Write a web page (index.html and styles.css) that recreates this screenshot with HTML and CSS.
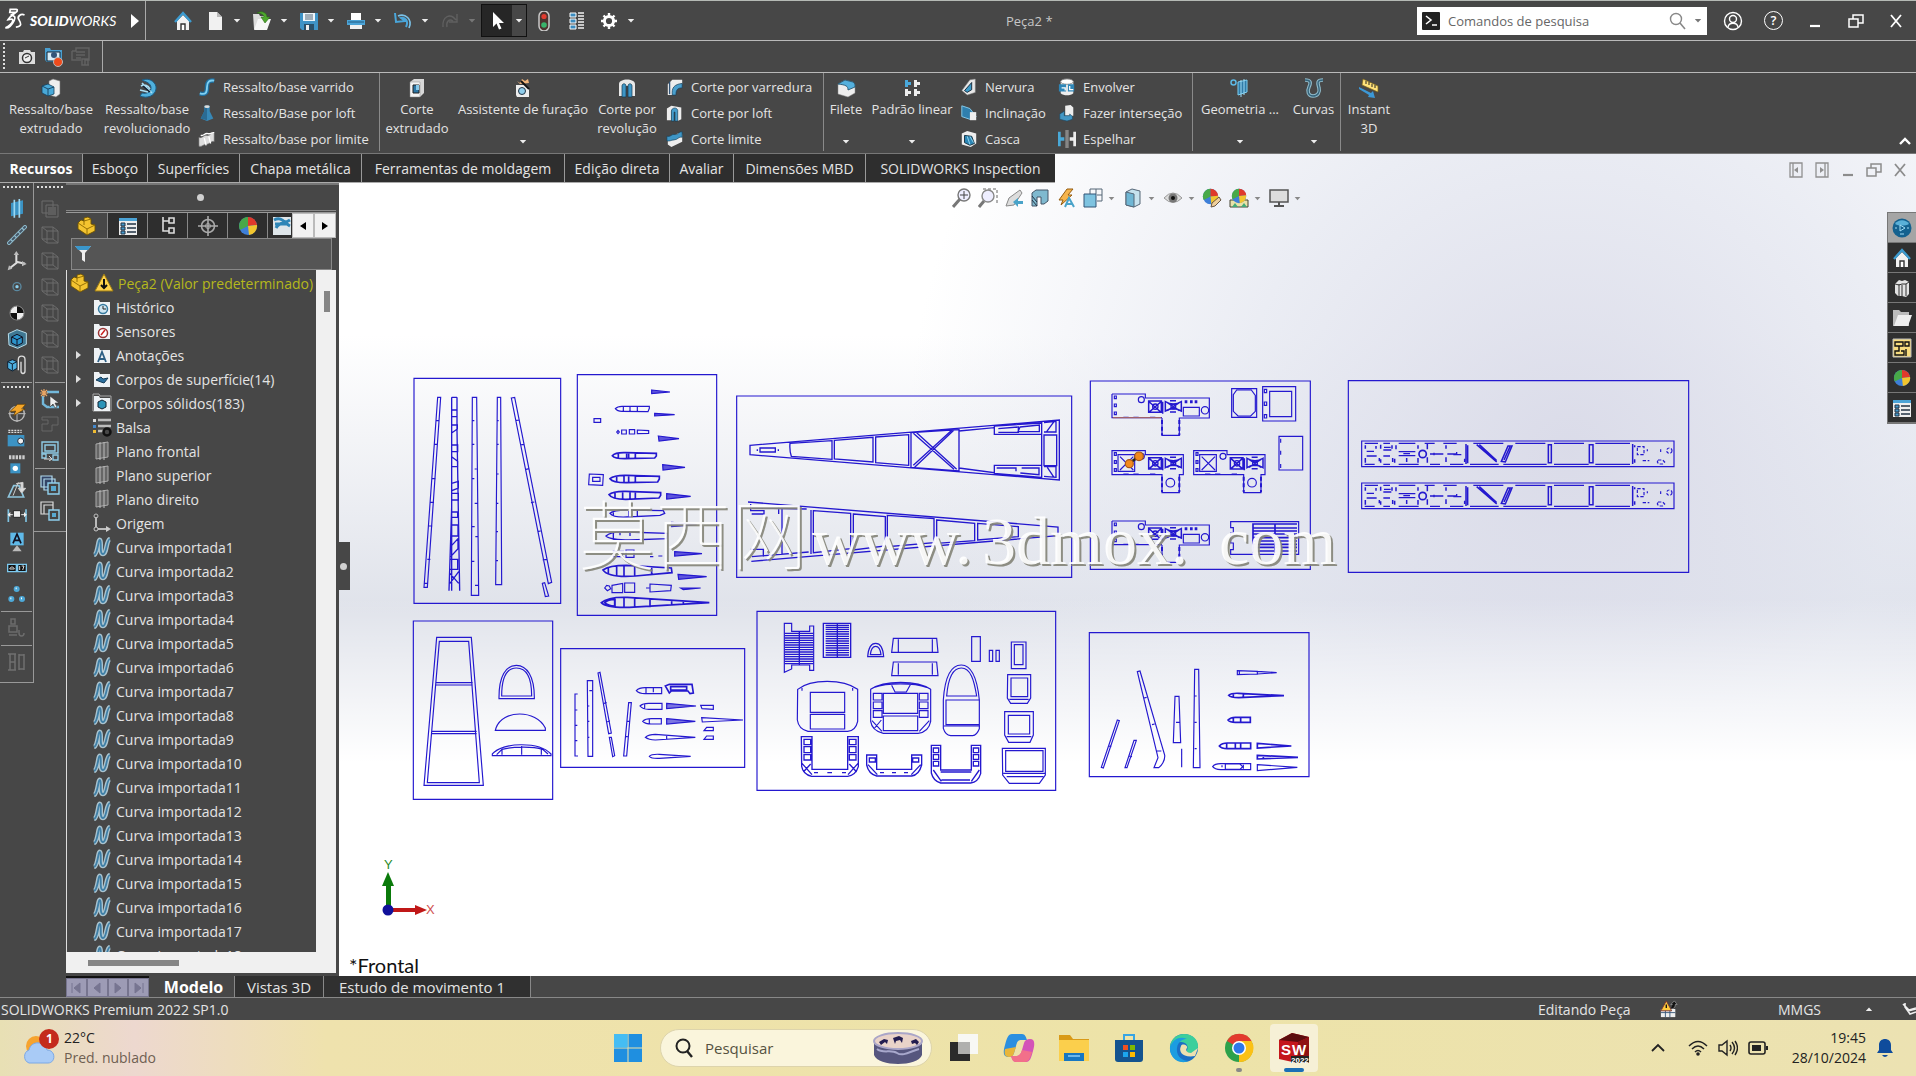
FILE: index.html
```html
<!DOCTYPE html>
<html lang="pt-BR">
<head>
<meta charset="utf-8">
<title>SOLIDWORKS - Peça2</title>
<link rel="stylesheet" href="styles.css">
</head>
<body>
<svg class="defs" aria-hidden="true">
<defs>
<linearGradient id="gb" x1="0" y1="0" x2="1" y2="1"><stop offset="0" stop-color="#9fdcf5"/><stop offset="1" stop-color="#2a7fb0"/></linearGradient>
<symbol id="home" viewBox="0 0 20 20"><path d="M4 10v9h12v-9l-6-6z" fill="#f2f2f2"/><path d="M2 11l8-9 8 9" fill="none" stroke="#3c9bd0" stroke-width="2.4"/><path d="M8 19v-6h4v6" fill="#fff" stroke="#333" stroke-width="1.4"/></symbol>
<symbol id="new" viewBox="0 0 20 20"><path d="M4 1h8l5 5v13H4z" fill="#f1f1f1"/><path d="M12 1v5h5z" fill="#b9b9b9"/></symbol>
<symbol id="open" viewBox="0 0 20 20"><path d="M1 3h6l1 2h6v13H2z" fill="#ddd"/><path d="M6 8h13l-4 11H2z" fill="#f7f7f7"/><path d="M5 2c5-3 10 0 10 4h3l-5 6-4-6h3c0-2-3-4-7-4z" fill="#4ea72e" stroke="#2d6b17" stroke-width=".6"/></symbol>
<symbol id="save" viewBox="0 0 20 20"><path d="M1 2h18v17H3l-2-2z" fill="#3f93c6"/><path d="M4 2h12v8H4z" fill="#eef5fa"/><path d="M6 4h8M6 6h8M6 8h8" stroke="#567"/><path d="M5 13h10v6H5z" fill="#2a4f68"/><path d="M7 14h3v5H7z" fill="#eee"/></symbol>
<symbol id="print" viewBox="0 0 20 20"><path d="M5 2h10v7H5z" fill="#fff"/><path d="M1 9h18v5H1z" fill="#4ba3d6"/><path d="M2 11h16" stroke="#235a80"/><path d="M4 14h12v4H4z" fill="#f0f0f0"/></symbol>
<symbol id="undo" viewBox="0 0 20 20"><path d="M2 2l1 9 9-1-4-3c4-1 8 3 5 9" fill="none" stroke="#4aa6da" stroke-width="2"/><path d="M5 5c7-3 15 3 11 12" fill="none" stroke="#7cc2e8" stroke-width="1.6"/></symbol>
<symbol id="redo" viewBox="0 0 20 20"><path d="M17 3v8H9M16 9C10 1 2 6 3 16M13 10c-4-3-7 1-6 6" fill="none" stroke="#606060" stroke-width="1.4"/></symbol>
<symbol id="arrow" viewBox="0 0 20 20"><path d="M6 1v15l3.500-3.500 2.500 6 2.500-1-2.500-5.500h5z" fill="#fff"/></symbol>
<symbol id="traffic" viewBox="0 0 20 20"><rect x="5" y="0" width="10" height="20" rx="5" fill="#4c3430" stroke="#c9c9c9" stroke-width="1.500"/><circle cx="10" cy="5.500" r="2.600" fill="#e23c30"/><circle cx="10" cy="14" r="2.800" fill="#39b36b"/></symbol>
<symbol id="list" viewBox="0 0 20 20"><path d="M3 2h6v4H3zM3 8h6v4H3zM3 14h6v4H3z" fill="#3c8cbf" stroke="#fff"/><path d="M11 2h6M11 5h6M11 8h6M11 11h6M11 14h6M11 17h6" stroke="#f4f4f4" stroke-width="1.400"/></symbol>
<symbol id="gear" viewBox="0 0 20 20"><circle cx="10" cy="10" r="4.600" fill="none" stroke="#fff" stroke-width="3"/><path d="M10 2v3M10 15v3M2 10h3M15 10h3M4.500 4.500l2 2M13.500 13.500l2 2M4.500 15.500l2-2M13.500 6.500l2-2" stroke="#fff" stroke-width="2.400"/></symbol>
<symbol id="cube" viewBox="0 0 20 20"><path d="M8 3l4-2 7 2v13l-4 3-7-2z" fill="#eee" stroke="#777" stroke-width=".6"/><path d="M1 8l6-2 6 3v7l-6 2-6-3z" fill="#49a9d8" stroke="#17405c" stroke-width=".8"/><path d="M1 8l6 3 6-2M7 11v7" fill="none" stroke="#17405c" stroke-width=".9"/></symbol>
<symbol id="revolve" viewBox="0 0 20 20"><path d="M5 2c8-3 15 3 14 9-1 7-9 10-16 7l2-3c5 1 9-1 9-5 0-5-5-6-9-8z" fill="#4fb0dd" stroke="#1d5c83"/><path d="M4 8c3-2 7-1 9 3M5 5l10 10M3 12l8 2" fill="none" stroke="#a9def4" stroke-width="1.600"/><path d="M6 8l7 6" stroke="#123" stroke-width="1.400"/></symbol>
<symbol id="sweep" viewBox="0 0 20 20"><path d="M2 17c7 2 8-1 8-7s3-8 8-7" fill="none" stroke="#1f6f9f" stroke-width="5"/><path d="M2 17c7 2 8-1 8-7s3-8 8-7" fill="none" stroke="#7fd0f2" stroke-width="2"/></symbol>
<symbol id="loft" viewBox="0 0 20 20"><path d="M7 2h6v6l4 8-7 3-7-3 4-8z" fill="#3788b7"/><path d="M7 3h3v15l-7-2 4-8z" fill="#2b6b93"/><ellipse cx="10" cy="3" rx="3" ry="1.500" fill="#ddd"/></symbol>
<symbol id="bound" viewBox="0 0 20 20"><path d="M1 8c4 2 5-3 9-2s4-4 8-3v10c-4-1-5 3-9 3s-4 3-8 2z" fill="#ddd" stroke="#666" stroke-width=".6"/><path d="M3 6c4 1 4-3 8-2s4-2 7-1M7 9l2 8M12 7l2 8" stroke="#fff" stroke-width="1.500" fill="none"/></symbol>
<symbol id="boundcut" viewBox="0 0 20 20"><path d="M2 9l13-6 3 2v8l-12 6-4-3z" fill="#eee"/><path d="M1 7c5 1 5-3 9-2s4-4 8-3v6c-4-1-5 3-9 3s-4 2-8 1z" fill="#3e96c6" stroke="#143c55" stroke-width=".7"/></symbol>
<symbol id="cut" viewBox="0 0 20 20"><path d="M3 4l4-3h10v14l-4 4H3z" fill="#d8d8d8"/><path d="M3 4h10v15H3z" fill="#f4f4f4" stroke="#888" stroke-width=".5"/><path d="M6 7h6v8H6z" fill="#2b75a4" stroke="#222"/><path d="M9 7h3v5H9z" fill="#88c9ea"/></symbol>
<symbol id="hole" viewBox="0 0 20 20"><path d="M3 7h10l3 3v9H4l-1-2z" fill="#eee"/><circle cx="9" cy="13" r="3.500" fill="#8fcdeb" stroke="#234"/><path d="M4 3l3 2 2-4 3 2 3-2 1 4-9 1z" fill="#f0b37a"/><path d="M8 3l8 8" stroke="#111" stroke-width="2"/></symbol>
<symbol id="revcut" viewBox="0 0 20 20"><path d="M2 6c0-6 16-6 16 0v12h-3V8H5v10H2z" fill="#e8e8e8"/><path d="M5 19V8c0-3 4-3 4 0v11zM11 19V8c0-3 4-3 4 0v11z" fill="#3e96c6" stroke="#14364d" stroke-width=".7"/></symbol>
<symbol id="sweepcut" viewBox="0 0 20 20"><path d="M2 19V7l5-5h11v5l-7 1v11z" fill="#eee"/><path d="M7 19C6 11 9 7 18 6v5c-5 0-7 2-7 8z" fill="#4a9fcd" stroke="#173e58" stroke-width=".8"/><path d="M4 4v14" stroke="#357" stroke-width="1.500"/></symbol>
<symbol id="loftcut" viewBox="0 0 20 20"><path d="M1 5l5-3 11 2v13l-4 2-3-2V8L6 7v11H1z" fill="#ececec"/><path d="M6 19V8c0-4 6-5 7-1v12h-3V9H9v10z" fill="#479dcc" stroke="#143c55" stroke-width=".7"/></symbol>
<symbol id="fillet" viewBox="0 0 20 20"><path d="M2 6l7-4 8 2c2 1 2 3 2 5v6l-7 4-10-3z" fill="#eee" stroke="#888" stroke-width=".5"/><path d="M9 2l8 2c2 1 2 3 2 5l-7 3c0-4-2-5-10-6z" fill="#54b0dd" stroke="#1c4b66" stroke-width=".8"/></symbol>
<symbol id="pattern" viewBox="0 0 20 20"><path d="M3 2h3v2h3v3H6v2H3z" fill="#4aa9dc"/><path d="M12 2h3v2h3v3h-3v2h-3zM3 11h3v2h3v3H6v2H3zM12 11h3v2h3v3h-3v2h-3z" fill="#eee"/></symbol>
<symbol id="rib" viewBox="0 0 20 20"><path d="M2 14l9-12 6-1v15l-9 3z" fill="#e8e8e8" stroke="#777" stroke-width=".6"/><path d="M5 14l8-9v8l-5 3z" fill="#3d9bc8" stroke="#123"/></symbol>
<symbol id="draft" viewBox="0 0 20 20"><path d="M2 2l9 3 7 9-7 3-9-3z" fill="#2f7fae" stroke="#8bd0f0"/><path d="M11 9h7v9h-7z" fill="#eee"/></symbol>
<symbol id="shell" viewBox="0 0 20 20"><path d="M2 4l6-3 10 3v11l-6 4-10-3z" fill="#eee"/><path d="M5 6l8 1 3 8-5 2-6-3z" fill="#2c86b5" stroke="#112b3b"/><path d="M8 7l3 9M11 7l4 7" stroke="#9bdcf4"/></symbol>
<symbol id="wrap" viewBox="0 0 20 20"><path d="M3 4v13c3 3 11 3 14 0V4z" fill="#eee"/><ellipse cx="10" cy="4" rx="7" ry="3" fill="#fff" stroke="#888"/><path d="M1 7h8v8H1zM11 7h7v8h-7z" fill="#2f86b7"/><path d="M4 11h4v3M13 9v4h4" fill="none" stroke="#fff" stroke-width="1.400"/></symbol>
<symbol id="inter" viewBox="0 0 20 20"><path d="M8 2l6-1 3 3v9H8z" fill="#eee"/><path d="M2 11l5-3v5h6v-2l3 3v3l-6 2-8-2z" fill="#4397c4" stroke="#1c4b66" stroke-width=".7"/></symbol>
<symbol id="mirror" viewBox="0 0 20 20"><path d="M0 2h3v6h4v4H3v6H0z" fill="#49a9d8"/><path d="M20 2h-3v6h-4v4h4v6h3z" fill="#eee"/><path d="M9 0v20M11 0v20" stroke="#aaa" stroke-width="1.200"/></symbol>
<symbol id="refgeo" viewBox="0 0 20 20"><circle cx="3.500" cy="4.500" r="2.500" fill="none" stroke="#5cb9e6" stroke-width="1.500"/><path d="M8 4l9-2v12l-9 3z" fill="#2f7ba8" stroke="#7fd0f2"/><path d="M11 2v17M14 1v16" stroke="#9fdcf5"/></symbol>
<symbol id="curves" viewBox="0 0 20 20"><path d="M1 2c6 0 6 3 4 7s-1 9 4 9 7-4 6-8-3-8 4-8" fill="none" stroke="#8fb9c8" stroke-width="3.600"/><path d="M1 2c6 0 6 3 4 7s-1 9 4 9 7-4 6-8-3-8 4-8" fill="none" stroke="#35637a" stroke-width="1.400"/></symbol>
<symbol id="instant" viewBox="0 0 20 20"><path d="M4 1l15 7v6L3 7z" fill="#ffe27a" stroke="#7c6418" stroke-width=".7"/><path d="M7 3v3M10 4v3M13 6v3M16 7v3" stroke="#222"/><path d="M0 9l12 6 2-2 2 7-7-1 1-2-10-6z" fill="#3c98d6"/></symbol>
<symbol id="curve" viewBox="0 0 20 20"><path d="M2 18C6 17 6 2 8 3s-1 14 3 14S14 3 18 2" fill="none" stroke="#a9c3cf" stroke-width="4.600"/><path d="M2 18C6 17 6 2 8 3s-1 14 3 14S14 3 18 2" fill="none" stroke="#3f7fa6" stroke-width="1.800"/></symbol>
<symbol id="folder" viewBox="0 0 20 20"><path d="M2 3h5l1 2h10v13H2z" fill="#eef2f5"/></symbol>
<symbol id="plane" viewBox="0 0 20 20"><path d="M4 3l12-2v15L4 18z" fill="#666" stroke="#aaa"/><path d="M8 1v18M12 1v18" stroke="#bbb"/></symbol>
<symbol id="part" viewBox="0 0 20 20"><path d="M1 7l3-3 3 1 0-3 4-1 3 2v5l4 1v6l-8 4-9-6z" fill="#f4c430" stroke="#6e5200" stroke-width=".9"/><path d="M1 7l9 6 8-4M10 13v6M7 5v4M7 5l7-2" fill="none" stroke="#8a6700" stroke-width=".9"/></symbol>
<symbol id="ball" viewBox="0 0 20 20"><circle cx="10" cy="10" r="9" fill="#3e7fd8"/><path d="M10 10V1A9 9 0 0 0 2 14z" fill="#48a948"/><path d="M10 10V1a9 9 0 0 1 9 8z" fill="#e0392b"/><path d="M10 10l9-1a9 9 0 0 1-8 10z" fill="#f2c52e"/></symbol>
<symbol id="dd" viewBox="0 0 10 6"><path d="M1 1h8L5 5.500z" fill="currentColor"/></symbol>
<symbol id="dim1" viewBox="0 0 20 20"><path d="M2 2h11v12H2zM6 6h12v12H6z" fill="none" stroke="#6c6c6c"/><path d="M8 8h8v8H8z" fill="#5e5e5e"/></symbol>
<symbol id="dim2" viewBox="0 0 20 20"><path d="M2 2h11l5 4v12H7l-5-4zM2 2l5 4h11M7 6v12M13 2v12H2M13 14l5 4" fill="none" stroke="#6c6c6c"/></symbol>
<symbol id="restore" viewBox="0 0 16 16"><path d="M1 6h9v8H1zM5 6V2h10v8h-5" fill="none" stroke="currentColor" stroke-width="1.500"/></symbol>
<symbol id="close" viewBox="0 0 16 16"><path d="M3 2l10 12M13 2L3 14" stroke="currentColor" stroke-width="1.800"/></symbol>
<symbol id="mini" viewBox="0 0 16 16"><path d="M3 13h10" stroke="currentColor" stroke-width="2.200"/></symbol>
</defs>
</svg>

<div class="app">
<header class="titlebar">
  <div class="brand">
    <svg class="ds" viewBox="0 0 48 60"><path d="M13 3h14c4 0 3 6-5 10l-8 4c10 0 12 4 8 12C18 37 10 47 2 46c8-3 16-11 17-17 0-5-7-3-11-2 4-8 12-12 18-17H12zM46 16c-9-4-18 4-13 11 4 7 9 15-7 17" fill="none" stroke="#fff" stroke-width="4"/></svg>
    <span class="word"><b>SOLID</b>WORKS</span>
    <button class="ic play" aria-label="Menu"><svg width="12" height="18" viewBox="0 0 12 18"><path d="M2 2l8 7-8 7z" fill="#fff"/></svg></button>
  </div>
  <nav class="quick" aria-label="Acesso rápido">
    <button class="ic solo" aria-label="Início"><svg class="i20"><use href="#home"/></svg></button>
    <button class="ic pair" aria-label="Novo"><svg class="i20"><use href="#new"/></svg><svg class="dd"><use href="#dd"/></svg></button>
    <button class="ic pair" aria-label="Abrir"><svg class="i20"><use href="#open"/></svg><svg class="dd"><use href="#dd"/></svg></button>
    <button class="ic pair" aria-label="Salvar"><svg class="i20"><use href="#save"/></svg><svg class="dd"><use href="#dd"/></svg></button>
    <button class="ic pair" aria-label="Imprimir"><svg class="i20"><use href="#print"/></svg><svg class="dd"><use href="#dd"/></svg></button>
    <button class="ic pair" aria-label="Desfazer"><svg class="i20"><use href="#undo"/></svg><svg class="dd"><use href="#dd"/></svg></button>
    <button class="ic pair faint" aria-label="Refazer"><svg class="i20"><use href="#redo"/></svg><svg class="dd"><use href="#dd"/></svg></button>
    <button class="ic pick" aria-label="Selecionar"><span><svg class="i20"><use href="#arrow"/></svg></span><svg class="dd"><use href="#dd"/></svg></button>
    <button class="ic solo" aria-label="Reconstruir"><svg class="i20"><use href="#traffic"/></svg></button>
    <button class="ic solo" aria-label="Propriedades"><svg class="i20"><use href="#list"/></svg></button>
    <button class="ic pair" aria-label="Opções"><svg class="i20"><use href="#gear"/></svg><svg class="dd"><use href="#dd"/></svg></button>
  </nav>
  <div class="doc-title">Peça2 *</div>
  <div class="right-tools">
    <div class="cmd">
      <svg width="18" height="18" viewBox="0 0 18 18"><rect width="18" height="18" rx="1" fill="#222"/><path d="M4 4l5 4-5 4M10 13h5" fill="none" stroke="#fff" stroke-width="1.600"/></svg>
      <input type="text" aria-label="Comandos de pesquisa" placeholder="Comandos de pesquisa">
      <svg width="18" height="18" viewBox="0 0 18 18"><circle cx="8" cy="7" r="5.500" fill="none" stroke="#888" stroke-width="1.400"/><path d="M12 11l5 6" stroke="#888" stroke-width="1.600"/></svg>
      <svg class="dd grey"><use href="#dd"/></svg>
    </div>
    <button class="ic win" aria-label="Usuário"><svg width="20" height="20" viewBox="0 0 20 20"><g fill="none" stroke="#fff" stroke-width="1.400"><circle cx="10" cy="10" r="8.500"/><circle cx="10" cy="8" r="3.500"/><path d="M5 16c1-5 9-5 10 0"/></g></svg></button>
    <button class="ic win help" aria-label="Ajuda"><span>?</span></button>
    <button class="ic win" aria-label="Minimizar"><svg class="i16"><use href="#mini"/></svg></button>
    <button class="ic win" aria-label="Restaurar"><svg class="i16"><use href="#restore"/></svg></button>
    <button class="ic win" aria-label="Fechar"><svg class="i16"><use href="#close"/></svg></button>
  </div>
</header>

<div class="capture">
  <div class="capture-in">
    <i class="vgrip"></i>
    <button class="ic" aria-label="Captura"><svg class="i20" viewBox="0 0 20 20"><path d="M2 5h4l1-2h6l1 2h4v12H2z" fill="#ddd"/><circle cx="10" cy="11" r="4.500" fill="#eee" stroke="#333" stroke-width="1.500"/><path d="M8 11l4-2" stroke="#333"/></svg></button>
    <button class="ic" aria-label="Gravar"><svg class="i20" viewBox="0 0 20 20"><path d="M1 1h5l1 2h11v12H3L1 13z" fill="#4a9fd0"/><path d="M3 5h13v9H3z" fill="#d6edf8" stroke="#123"/><circle cx="10" cy="8" r="3" fill="#357"/><circle cx="14" cy="15" r="4.500" fill="#ef4b1c" stroke="#bbb"/></svg></button>
    <button class="ic" aria-label="Parar"><svg class="i20" viewBox="0 0 20 20"><path d="M1 4h4V1h13v12h-4v5h4M1 4v9h9M5 5h9M5 8h9M5 11h5M11 12h6v6h-6z" fill="none" stroke="#626262" stroke-width="1.400"/></svg></button>
  </div>
</div>

<div class="ribbon">
  <section class="grp g1">
    <button class="big"><svg class="i20"><use href="#cube"/></svg><span>Ressalto/base extrudado</span></button>
    <button class="big"><svg class="i20"><use href="#revolve"/></svg><span>Ressalto/base revolucionado</span></button>
    <div class="stack">
      <button class="row"><svg class="i18"><use href="#sweep"/></svg>Ressalto/base varrido</button>
      <button class="row"><svg class="i18"><use href="#loft"/></svg>Ressalto/Base por loft</button>
      <button class="row"><svg class="i18"><use href="#bound"/></svg>Ressalto/base por limite</button>
    </div>
  </section>
  <section class="grp g2">
    <button class="big"><svg class="i20"><use href="#cut"/></svg><span>Corte extrudado</span></button>
    <button class="big"><svg class="i20"><use href="#hole"/></svg><span>Assistente de furação</span><svg class="dd"><use href="#dd"/></svg></button>
    <button class="big"><svg class="i20"><use href="#revcut"/></svg><span>Corte por revolução</span></button>
    <div class="stack">
      <button class="row"><svg class="i18"><use href="#sweepcut"/></svg>Corte por varredura</button>
      <button class="row"><svg class="i18"><use href="#loftcut"/></svg>Corte por loft</button>
      <button class="row"><svg class="i18"><use href="#boundcut"/></svg>Corte limite</button>
    </div>
  </section>
  <section class="grp g3">
    <button class="big"><svg class="i20"><use href="#fillet"/></svg><span>Filete</span><svg class="dd"><use href="#dd"/></svg></button>
    <button class="big"><svg class="i20"><use href="#pattern"/></svg><span>Padrão linear</span><svg class="dd"><use href="#dd"/></svg></button>
    <div class="stack">
      <button class="row"><svg class="i18"><use href="#rib"/></svg>Nervura</button>
      <button class="row"><svg class="i18"><use href="#draft"/></svg>Inclinação</button>
      <button class="row"><svg class="i18"><use href="#shell"/></svg>Casca</button>
    </div>
    <div class="stack">
      <button class="row"><svg class="i18"><use href="#wrap"/></svg>Envolver</button>
      <button class="row"><svg class="i18"><use href="#inter"/></svg>Fazer interseção</button>
      <button class="row"><svg class="i18"><use href="#mirror"/></svg>Espelhar</button>
    </div>
  </section>
  <section class="grp g4">
    <button class="big"><svg class="i20"><use href="#refgeo"/></svg><span>Geometria ...</span><svg class="dd"><use href="#dd"/></svg></button>
    <button class="big"><svg class="i20"><use href="#curves"/></svg><span>Curvas</span><svg class="dd"><use href="#dd"/></svg></button>
  </section>
  <section class="grp g5">
    <button class="big"><svg class="i20"><use href="#instant"/></svg><span>Instant 3D</span></button>
  </section>
  <button class="ic fold" aria-label="Recolher"><svg width="12" height="8" viewBox="0 0 12 8"><path d="M1 7l5-5 5 5" fill="none" stroke="#fff" stroke-width="2.400"/></svg></button>
</div>

<main class="work">
  <nav class="tabs">
    <button class="tab on">Recursos</button><button class="tab">Esboço</button><button class="tab">Superfícies</button><button class="tab">Chapa metálica</button><button class="tab">Ferramentas de moldagem</button><button class="tab">Edição direta</button><button class="tab">Avaliar</button><button class="tab">Dimensões MBD</button><button class="tab">SOLIDWORKS Inspection</button>
  </nav>

  <aside class="side">
    <div class="bar bar1">
      <i class="hgrip"></i>
      <button class="ic"><svg viewBox="18 56 60 60"><path d="M30 68l36-8v40l-36 8z" fill="#3b93c4"/><path d="M40 58v54M55 56v56" stroke="#9bd8f3" stroke-width="5"/></svg></button>
      <button class="ic"><svg viewBox="18 134 60 60"><path d="M20 192l56-56" stroke="#8fbccd" stroke-width="12"/><path d="M22 190l52-52" stroke="#456" stroke-width="6" stroke-dasharray="12 4"/></svg></button>
      <button class="ic"><svg viewBox="18 214 60 60"><path d="M46 222v28l-20 16M46 246l26 6" fill="none" stroke="#ddd" stroke-width="6"/><path d="M46 214l-8 12h16zM20 272l4-15 10 10zM77 253l-14-9v16z" fill="#bbb"/></svg></button>
      <button class="ic"><svg viewBox="18 292 60 60"><circle cx="48" cy="321" r="12" fill="none" stroke="#5b89a0" stroke-width="4"/><circle cx="48" cy="321" r="5" fill="#8cd0ef"/></svg></button>
      <button class="ic"><svg viewBox="18 368 60 60"><circle cx="48" cy="398" r="21" fill="#eee" stroke="#888" stroke-width="3"/><path d="M48 398v-20a20 20 0 0 1 20 20zM48 398v20a20 20 0 0 1-20-20z" fill="#111"/></svg></button>
      <button class="ic"><svg viewBox="18 446 60 60"><path d="M22 460l26-12 28 10v34l-26 12-26-10z" fill="#3f7893" stroke="#b7dcea" stroke-width="3"/><path d="M32 470l16-8 16 8v18l-16 8-16-8z" fill="#2b93cb" stroke="#112" stroke-width="3"/><path d="M32 470l16 8 16-8M48 478v18" stroke="#112" stroke-width="3" fill="none"/></svg></button>
      <button class="ic"><svg viewBox="18 524 60 60"><path d="M20 544l14-6 14 6v20l-14 8-14-8z" fill="#4dafe0" stroke="#123" stroke-width="3"/><path d="M20 544l14 7 14-7M34 551v20" fill="none" stroke="#123" stroke-width="3"/><path d="M52 570v-32c0-14 20-14 20 0v34c0 10-12 10-12 0v-28" fill="none" stroke="#ddd" stroke-width="4"/></svg></button>
      <hr><i class="hgrip"></i>
      <button class="ic"><svg viewBox="18 665 60 60"><circle cx="48" cy="700" r="22" fill="none" stroke="#bbb" stroke-width="4"/><path d="M48 676v50M22 700h52" stroke="#bbb" stroke-width="3"/><path d="M26 694l24-22h24l-12 14h10l-34 20 6-14z" fill="#f4a62a" stroke="#5b3a00" stroke-width="2"/></svg></button>
      <button class="ic"><svg viewBox="18 745 60 60"><path d="M22 752h40M22 758h40" stroke="#ddd" stroke-width="4" stroke-dasharray="6 3"/><path d="M20 766h50v34H20z" fill="#3c93c4"/><circle cx="59" cy="784" r="9" fill="#eee" stroke="#234" stroke-width="3"/></svg></button>
      <button class="ic"><svg viewBox="18 822 60 60"><path d="M24 832h50" stroke="#ccc" stroke-width="12" stroke-dasharray="7 3"/><path d="M28 850h30v30H28z" fill="#3c93c4"/><circle cx="43" cy="865" r="8" fill="#fff"/></svg></button>
      <button class="ic"><svg viewBox="18 903 60 60"><path d="M22 954l16-34h16l14 34z" fill="none" stroke="#8fc6de" stroke-width="5"/><path d="M36 950l16-40M46 914h14v16l-8-2 10 14 12-14h-8v-18z" fill="#ddd" stroke="#ccc" stroke-width="3"/></svg></button>
      <button class="ic"><svg viewBox="18 980 60 60"><path d="M22 990v38M75 990v38" stroke="#7fc3e2" stroke-width="5"/><path d="M22 1006h54" stroke="#eee" stroke-width="3"/><path d="M37 994h22v20H37z" fill="#eee" stroke="#222" stroke-width="3"/><path d="M28 998v16l-8-8zM69 998v16l8-8z" fill="#eee"/></svg></button>
      <button class="ic"><svg viewBox="18 1058 60 60"><path d="M28 1060h40v38H28z" fill="#5fb9e8"/><path d="M36 1092l12-28 12 28M40 1083h16" fill="none" stroke="#112" stroke-width="5"/><path d="M48 1098l-14 18h28z" fill="#bbb"/></svg></button>
      <button class="ic"><svg viewBox="18 1137 60 60"><path d="M20 1156h26v22H20zM50 1156h26v22H50z" fill="#111" stroke="#7cc9ef" stroke-width="4"/><path d="M26 1170c2-8 12-8 14 0zM56 1161v12M62 1161h7l-4 12" fill="none" stroke="#ddd" stroke-width="3"/></svg></button>
      <button class="ic"><svg viewBox="18 1215 60 60"><g fill="#4ea9d8"><circle cx="47" cy="1230" r="9"/><circle cx="31" cy="1260" r="9"/><circle cx="63" cy="1260" r="9"/></g><path d="M44 1228h3M28 1258h3M60 1258h3" stroke="#fff" stroke-width="5"/></svg></button>
      <hr>
      <button class="ic"><svg viewBox="0 0 20 20"><path d="M4 1h4v5H4zM2 8h8v6H2zM2 17h8M12 12v3c0 4 5 4 5 0" fill="none" stroke="#6c6c6c" stroke-width="1.500"/></svg></button>
      <hr>
      <button class="ic"><svg viewBox="0 0 20 20"><path d="M3 2v16M8 2v16M3 10h5M12 2v16M17 2v16M12 3h5M12 17h5M1 2h8M1 18h8" fill="none" stroke="#707070" stroke-width="1.500"/></svg></button>
    </div>
    <div class="bar bar2">
      <i class="hgrip"></i>
      <button class="ic"><svg><use href="#dim1"/></svg></button>
      <button class="ic"><svg><use href="#dim2"/></svg></button>
      <button class="ic"><svg><use href="#dim2"/></svg></button>
      <button class="ic"><svg><use href="#dim2"/></svg></button>
      <button class="ic"><svg><use href="#dim2"/></svg></button>
      <button class="ic"><svg><use href="#dim2"/></svg></button>
      <button class="ic"><svg><use href="#dim2"/></svg></button>
      <hr>
      <button class="ic"><svg viewBox="0 0 20 20"><path d="M7 3h12M3 7v8l4 3h12" fill="none" stroke="#73b8da" stroke-width="2.400"/><path d="M4 0v8M0 4h8M1 1l6 6M7 1L1 7" stroke="#e9a665" stroke-width="1.200"/><path d="M10 7v11l3-3 2 4 2-1-2-4h4z" fill="#eee" stroke="#333" stroke-width=".6"/></svg></button>
      <button class="ic"><svg viewBox="0 0 20 20"><path d="M2 2h16v8h-6v6H2v-7h6V5H2z" fill="none" stroke="#666"/></svg></button>
      <button class="ic"><svg viewBox="0 0 20 20"><path d="M2 1h16v11H2zM5 4h10v6H5z" fill="none" stroke="#8fcbe6" stroke-width="1.400"/><path d="M2 13h4v4H2zM13 14h5v5h-5z" fill="none" stroke="#8fcbe6" stroke-width="1.400"/><path d="M4 18h7M9 15l3 3-3 2" stroke="#ddd" fill="none"/></svg></button>
      <hr>
      <button class="ic"><svg viewBox="0 0 20 20"><path d="M1 1h11v11H1zM4 4h11v11H4z" fill="#346" stroke="#b3dbed" stroke-width="1.200"/><path d="M8 8h11v11H8z" fill="#444" stroke="#8fd0ee" stroke-width="1.400"/><path d="M11 11h5v5h-5z" fill="#58a9d0"/></svg></button>
      <button class="ic"><svg viewBox="0 0 20 20"><path d="M1 1h12v12H1zM4 4h9v9H4z" fill="#444" stroke="#ddd" stroke-width="1.200"/><path d="M9 9h10v10H9z" fill="#444" stroke="#8fd0ee" stroke-width="1.400"/><path d="M12 12h4v4h-4z" fill="#58a9d0"/></svg></button>
    </div>
    <div class="tree-panel">
      <div class="pin"><i class="dot"></i></div>
      <div class="ptabs">
        <button class="ptab on" aria-label="Árvore"><svg class="i20"><use href="#part"/></svg></button>
        <button class="ptab" aria-label="Propriedades"><svg class="i20" viewBox="0 0 20 20"><path d="M1 2h18v17H1z" fill="#eee"/><path d="M1 2h18v3H1z" fill="#4ba3d6"/><path d="M3 7h4v3H3zM3 11h4v3H3zM3 15h4v3H3z" fill="#49c" stroke="#234"/><path d="M9 8h9M9 12h9M9 16h9" stroke="#234" stroke-width="1.400"/></svg></button>
        <button class="ptab" aria-label="Configurações"><svg class="i20" viewBox="0 0 20 20"><path d="M5 1v14h6M5 5h6M11 2h5v5h-5zM11 12h5v5h-5z" fill="none" stroke="#ddd" stroke-width="1.600"/></svg></button>
        <button class="ptab" aria-label="Dimensões"><svg class="i20" viewBox="0 0 20 20"><circle cx="10" cy="10" r="6.500" fill="none" stroke="#aaa" stroke-width="1.600"/><path d="M10 0v20M0 10h20" stroke="#aaa" stroke-width="1.600"/><circle cx="10" cy="10" r="2.500" fill="none" stroke="#aaa"/></svg></button>
        <button class="ptab" aria-label="Aparência"><svg class="i20"><use href="#ball"/></svg></button>
        <button class="ptab cutoff" aria-label="CAM"><svg class="i20" viewBox="0 0 20 20"><path d="M1 1h18v18H1z" fill="#dfe6ea"/><path d="M2 4c8-4 10 3 16 6M4 12c3-6 8-4 14-8M3 8h12" fill="none" stroke="#2f86b7" stroke-width="3"/></svg></button>
        <button class="scr" aria-label="Anterior"><svg width="8" height="10" viewBox="0 0 8 10"><path d="M7 1v8L1 5z"/></svg></button>
        <button class="scr" aria-label="Próximo"><svg width="8" height="10" viewBox="0 0 8 10"><path d="M1 1v8l6-4z"/></svg></button>
      </div>
      <label class="filter"><svg class="i20" viewBox="0 0 20 20"><path d="M2 2h16l-6 7v9l-3-2V9z" fill="#eee"/><path d="M2 2h16l-3 4H5z" fill="#3a96cb"/></svg><input type="text" aria-label="Filtro"></label>
      <div class="tree-wrap">
        <ul class="tree">
          <li class="root"><svg class="i20"><use href="#part"/></svg><svg class="i18" viewBox="0 0 20 20"><path d="M10 1l9 17H1z" fill="#ffd24a" stroke="#9b7b12"/><path d="M10 6v9M7 12l3 3 3-3" fill="none" stroke="#111" stroke-width="2"/></svg>Peça2 (Valor predeterminado)</li>
          <li><i></i><svg viewBox="0 0 20 20"><use href="#folder"/><circle cx="11" cy="12" r="4.500" fill="#cfe6f2" stroke="#367a9f" stroke-width="1.500"/><path d="M11 9v3h3" stroke="#222" fill="none"/></svg>Histórico</li>
          <li><i></i><svg viewBox="0 0 20 20"><use href="#folder"/><circle cx="11" cy="12" r="4.500" fill="#fff" stroke="#933" stroke-width="1.500"/><path d="M9 14l4-5" stroke="#c22" stroke-width="1.500"/></svg>Sensores</li>
          <li><i class="exp"></i><svg viewBox="0 0 20 20"><use href="#folder"/><path d="M6 17l4-10 4 10M7.500 14h5" fill="none" stroke="#2d5f85" stroke-width="1.800"/></svg>Anotações</li>
          <li><i class="exp"></i><svg viewBox="0 0 20 20"><use href="#folder"/><path d="M4 11l5-3 2 2 5-1-4 5-3-1z" fill="#2b6f9e" stroke="#153c58"/></svg>Corpos de superfície(14)</li>
          <li><i class="exp"></i><svg viewBox="0 0 20 20"><path d="M1 1h6l1 2h11v15H1z" fill="none" stroke="#aaa"/><use href="#folder"/><path d="M6 9l4-2 4 2v5l-4 2-4-2z" fill="#2b93b8" stroke="#123"/></svg>Corpos sólidos(183)</li>
          <li><i></i><svg viewBox="0 0 20 20"><path d="M6 3h13M6 9h13M6 14h6" stroke="#bbb" stroke-width="2.400"/><path d="M1 2h3v3H1z" fill="#ddd"/><path d="M1 8h3v3H1z" fill="#48c"/><path d="M1 13h3v3H1z" fill="#eb3"/><circle cx="15" cy="15" r="3.500" fill="none" stroke="#111" stroke-width="2.500"/></svg>Balsa</li>
          <li><i></i><svg><use href="#plane"/></svg>Plano frontal</li>
          <li><i></i><svg><use href="#plane"/></svg>Plano superior</li>
          <li><i></i><svg><use href="#plane"/></svg>Plano direito</li>
          <li><i></i><svg viewBox="0 0 20 20"><path d="M4 4v12h13" fill="none" stroke="#bbb" stroke-width="2"/><circle cx="4" cy="3" r="2" fill="none" stroke="#bbb"/><path d="M14 13l5 3-5 3z" fill="#ccc"/><circle cx="4" cy="16" r="2" fill="#444" stroke="#ccc"/></svg>Origem</li>
          <li><i></i><svg><use href="#curve"/></svg>Curva importada1</li>
          <li><i></i><svg><use href="#curve"/></svg>Curva importada2</li>
          <li><i></i><svg><use href="#curve"/></svg>Curva importada3</li>
          <li><i></i><svg><use href="#curve"/></svg>Curva importada4</li>
          <li><i></i><svg><use href="#curve"/></svg>Curva importada5</li>
          <li><i></i><svg><use href="#curve"/></svg>Curva importada6</li>
          <li><i></i><svg><use href="#curve"/></svg>Curva importada7</li>
          <li><i></i><svg><use href="#curve"/></svg>Curva importada8</li>
          <li><i></i><svg><use href="#curve"/></svg>Curva importada9</li>
          <li><i></i><svg><use href="#curve"/></svg>Curva importada10</li>
          <li><i></i><svg><use href="#curve"/></svg>Curva importada11</li>
          <li><i></i><svg><use href="#curve"/></svg>Curva importada12</li>
          <li><i></i><svg><use href="#curve"/></svg>Curva importada13</li>
          <li><i></i><svg><use href="#curve"/></svg>Curva importada14</li>
          <li><i></i><svg><use href="#curve"/></svg>Curva importada15</li>
          <li><i></i><svg><use href="#curve"/></svg>Curva importada16</li>
          <li><i></i><svg><use href="#curve"/></svg>Curva importada17</li>
          <li><i></i><svg><use href="#curve"/></svg>Curva importada18</li>
        </ul>
        <div class="vscroll"><i></i></div>
      </div>
      <div class="hscroll"><i></i></div>
    </div>
  </aside>

  <section class="view">
    <svg class="canvas" viewBox="339 154 1577 822" preserveAspectRatio="xMinYMin slice" fill="none" stroke="#2418cf">
      <g transform="translate(400 360) scale(.33333)" stroke-width="3.500">
        <path d="M42 55h440v675H42zM532 44h418v722H532zM40 783h418v535H40zM482 866h552v356H482z"/>
        <path d="M113 112h9L82 682H72zM108 182h10M103 253h10M97 356h10M92 427h10M87 498h10M82 598h9M74 670h9"/>
        <path d="M155 112v580M171 112v100l8 480M147 692l8-250M155 112h16M155 150h16v20h-16zM155 195h17v12l-17 12M155 255h18v20h-18zM155 290l18 14v16h-18M155 370l20-6v20l-20 8zM155 400h20v20h-20M153 456h20v16h-20M152 495h22v33h-22M152 560l22-24v30l-22 24M151 598h22v30h-22M150 640l26 30M176 635l-26 35" stroke-width="4"/>
        <path d="M217 112h13l6 594h-22zM217 182h6M217 253h6M217 356h6M224 327h6M224 430h8M216 500h8M226 530h8M215 604h8M225 676h9"/>
        <path d="M292 112h10l3 562h-18zM291 182h5M291 253h5M291 342h5M290 430h5M289 515h5M289 602h5"/>
        <path d="M334 114l10-2 111 555-10 4zM347 182l10-2M361 255l10-2M378 328l10-2M393 428l10-2M412 515l10-2M428 600l12-2M427 670l7-2 12 40-10 2z"/>
        <path d="M582 176h20v11h-20zM568 342l42 2-2 32-42-2zM578 352h22v12h-22z"/>
        <path d="M755 90l55 6-55 5zM764 160l60 4-60 4zM775 228l62 8-60 7zM788 314l67 8-66 8zM800 401l72 8-72 8zM815 487l75 7-75 6zM824 575l82 6-82 7zM834 643l86 7-84 8zM842 684l60 0-52 5z" fill="#5d55dc"/>
        <path d="M646 146q6-7 20-7h82v6l-4 10-78-1q-14 0-20-8zM670 140v14M690 140v14M712 140v14"/>
        <path d="M650 216l4-5 4 5-4 5zM665 210h14v12h-14zM688 209h16v13h-16zM712 210l34 2v8l-34 1z"/>
        <path d="M637 287q8-10 40-9l92 2v8l-5 6-90 2q-30 0-37-9zM655 280v16M680 279v18M706 279v18M686 279v18" stroke-width="5"/>
        <path d="M630 356q12-11 50-10l98 3v8l-5 9-95 2q-40 0-48-12zM650 348v16M672 346v22M686 346v22M706 347v20" stroke-width="5"/>
        <path d="M627 404q12-11 50-10l105 4v8l-5 8-100 4q-42 0-50-14zM645 396v18M668 394v22M690 394v22M706 394v22" stroke-width="5"/>
        <path d="M630 460q10-10 50-10l110 2 4 8-14 6-100 5q-40 2-50-11zM640 452v16M686 450v20M712 450v20" stroke-width="4"/>
        <path d="M618 528q14-14 60-12l124 4-2 16-110 4q-60 0-72-12zM640 518v22M660 516v10M690 516v12" stroke-width="4"/>
        <path d="M640 574h30l-4 16h-26zM678 570h24v22h-24zM750 590h10M775 588h12"/>
        <path d="M609 630q18-14 70-14l135 8 2 14-110 10q-80 6-97-18zM625 620v22M650 616v30M672 615v32M704 616v32M755 620v24" stroke-width="5"/>
        <path d="M614 684l6-8 8 2 4 8-10 6zM636 676l32-6v28h-32zM674 669h30v28h-30zM738 684h10M750 672l64 4-2 16-62 4z"/>
        <path d="M604 728q20-18 78-16l246 16-240 14q-70 2-84-14zM614 728q10-10 30-10v20q-20 0-30-10zM645 716v26M672 713v30M704 713v30M750 716v26M815 719v18M850 722v12" stroke-width="5"/>
        <path d="M110 832h104l36 444H72zM118 844h88l32 424H82zM106 968h112M106 975h112M94 1114h136M94 1121h136" />
        <path d="M297 1012c0-62 20-96 52-96s54 34 54 96v4H297zM305 1008c0-58 16-84 44-84s46 26 46 84zM288 1104c20-56 120-56 148 0l0 7H286zM277 1182c30-36 140-38 176 0v5H277zM290 1184l16-16c30-8 90-10 122 0l16 14M365 1158v26M306 1168v16M424 1168v16"/>
        <path d="M533 1002h-8v186h9M524 1050h8M524 1096h8M524 1142h8M562 962h16v227h-14zM562 1038h6M562 1084h6M562 1132h6M568 992h8M594 939l6-2 34 182-8 2zM612 1030l8-2M622 1085l8-2M628 1132h6l10 55-6 3zM686 1028h8l-14 160h-9zM680 1084h8M675 1130h8"/>
        <path d="M709 992q8-9 26-9h50v18h-50q-18 0-26-9zM738 983v18M760 985v12M720 1038q8-8 26-8h40v18h-40q-18 0-26-10zM734 1030v18M728 1084q8-8 26-8h30v16h-30q-18 0-26-8zM748 1077v14M736 1132q10-9 30-9l120 9-120 8q-20 0-30-8zM800 1125v14M748 1189q6-7 30-6l94 6-94 6q-24 1-30-6z"/>
        <path d="M796 978l12-5h68l4 26-10 2-6-8h-50l-6 6zM812 980h48v10h-48z" stroke-width="5"/>
        <path d="M800 1030l88 8-88 8zM800 1076l86 8-86 8z" fill="#7b75e2"/>
        <path d="M902 1036h38v12l-34-2zM905 1073l124 7-122 6zM912 1112l8-10h20v10zM912 1138l8-10h20v10z"/>
      </g>
      <g transform="translate(720 380) scale(.33333)" stroke-width="4">
        <path d="M50 48h1005v544H50z" stroke-width="3.500"/>
        <path d="M90 196L1018 120v180L90 224zM120 204h46v12h-46zM112 208v5M175 208v5M210 190l126-8v56l-122-9q-6-18-4-39zM343 181l116-9v74l-116-9zM467 171l99-7v92l-99-8zM573 158l144-9v124l-144-11zM580 160l122 108M590 158l120 110M584 262l118-112M580 256l116-106M717 153l106-10v12M717 264l106 14v-22M823 138l142-9v34H823zM835 146l60-5v16h-60M900 141l58-6v20h-64zM823 256h142v36l-142-12zM830 264h58v10M905 264h52v20l-56-5M972 165h38v92h-38zM965 125v170M972 128l36-4v32h-36M972 260h36v32l-36-3M980 155l22-30M982 262l20 30"/>
        <path d="M84 366l930 75v26L94 544M92 372v20h40v10H95M92 508h38v22M176 382v20M186 384v140M273 390v132M280 392l112 8v106l-112 12zM400 402l96 8v88l-96 12zM502 406l140 10v72l-140 12zM650 420l114 10v52l-114 8zM773 430l122 10v30l-122 10zM96 384l164 3M96 530l170-14" />
      </g>
      <g transform="translate(740 600) scale(.33333)" stroke-width="3.500">
        <path d="M51 34h896v537H51z"/>
        <path d="M133 70h22v24h54V78h12v133h-12v-16h-54v12l-22 10z"/><path d="M134 100h86M134 107h86M134 114h86M134 121h86M134 128h86M134 135h86M134 142h86M134 149h86M134 156h86M134 163h86M134 170h86M134 177h86M134 184h86M134 191h86M178 95v100M250 70h82v102h-82zM257 76h70M257 82h70M257 88h70M257 95h70M257 102h70M257 109h70M257 116h70M257 123h70M257 130h70M257 137h70M257 144h70M257 151h70M257 158h70M257 165h70M292 72v98" stroke-width="4"/>
        <path d="M383 170c2-28 10-40 24-40s22 12 24 40zM391 164c2-18 6-25 16-25s14 7 16 25zM460 115h130l4 42H455zM475 118v38M577 118v38M460 186h130l4 41H455zM475 190v34M577 190v34M695 110h26v74h-26zM748 151h10v33h-10zM768 151h10v33h-10zM814 126h44v80h-44zM823 134h26v60h-26zM803 224h69v70l-10 16h-50l-10-16zM813 234h50v56h-50zM808 298h58M794 335h86v70l-10 22h-64l-12-22zM805 346h64v56h-64zM800 410h74M787 445h129v80l-18 25h-90l-20-25zM797 452h112v62H797zM790 520h126M800 530h110"/>
        <path d="M173 268c40-32 136-32 180 0v96q-6 28-30 30H204q-28-6-32-34zM211 277h103v60H211zM211 343h103v44H211zM186 264v8M338 264v8"/>
        <path d="M392 268c40-28 140-28 180 0v96q-6 32-38 36H430q-34-8-38-36zM402 262c40-14 120-14 158 0M430 280h103v60H430zM430 348h103v44H430zM400 280h26v20h-26zM400 306h26v20h-26zM400 332h26v20h-26zM538 280h26v20h-26zM538 306h26v20h-26zM538 332h26v20h-26zM455 256l10 20h34l12-22M396 362l30 32M568 362l-30 32M404 384l20-24"/>
        <path d="M610 300c4-60 20-105 54-105s48 45 54 105v86q-8 20-20 21h-66q-16-2-22-22zM620 288c4-48 16-84 44-84s38 36 46 84zM618 300h100v74H618zM612 378h108"/>
        <path d="M184 410h32v98h107v-98h32v90q-8 26-32 29H215q-26-6-30-30zM192 418h20v16h-20zM192 440h20v18h-20zM192 464h20v16h-20zM328 418h20v16h-20zM328 440h20v18h-20zM328 464h20v16h-20zM186 490l30 34M354 490l-30 34M190 516l22-24M350 516l-22-24M222 518h12M262 518h14M306 518h12" stroke-width="4"/>
        <path d="M380 465h30v43h105v-43h30v30q-8 30-30 33H410q-24-6-30-33zM388 474h18v12h-18zM518 474h18v12h-18zM384 494l28 30M542 494l-28 30M420 518h12M456 518h12M492 518h12M574 436h28v74h92v-74h28v85q-8 26-30 28h-90q-22-6-28-30zM580 444h16v14h-16zM580 464h16v14h-16zM580 484h16v14h-16zM700 444h16v14h-16zM700 464h16v14h-16zM700 484h16v14h-16zM602 516h92M604 540h86M580 510l24 34M718 510l-24 34" stroke-width="4"/>
      </g>
      <g transform="translate(1070 370) scale(.33333)" stroke-width="3.500">
        <path d="M61 33h660v565H61zM58 788h659v432H58z"/>
        <defs>
          <g id="ctr"><path d="M236 93h38v34h-38zM238 96l34 30M272 96l-34 30M286 95q24 14 48 0v28q-24-14-48 0zM292 98l36 24M328 98l-36 24M300 92h18M300 126h18M278 95v36" stroke-width="4.500"/><circle cx="256" cy="110" r="8" stroke-width="4"/><circle cx="310" cy="110" r="7" stroke-width="4"/><circle cx="214" cy="89" r="9"/><path d="M133 78h6v8h-6zM133 102h6v8h-6zM133 126h6v8h-6zM160 142h16M190 142h16M240 142h16"/></g>
          <g id="longp"><use href="#ctr"/><path d="M126 72h100v12h192v60h-90v52h-52v-52M126 72v71h150M340 112h48v26h-48z"/><circle cx="405" cy="121" r="11"/><path d="M344 95h8M360 95h8M374 95h8" stroke-width="9"/><path d="M276 150v46M328 150v46" stroke-width="6" stroke-dasharray="12 8"/></g>
          <g id="shortp"><use href="#ctr"/><path d="M126 72h100v12h114v60h-12v54h-52v-54H126zM144 84h50v50h-50zM150 90l40 40M190 90l-40 40"/><circle cx="301" cy="168" r="13"/><path d="M276 150v46M328 150v46" stroke-width="6" stroke-dasharray="12 8"/></g>
        </defs>
        <use href="#longp"/><path d="M128 143h146" stroke="#a0606a"/>
        <use href="#shortp" y="170"/><use href="#shortp" x="245" y="170"/><use href="#longp" y="381"/>
        <path d="M178 280l30-22" stroke-width="8" stroke="#222"/><circle cx="178" cy="281" r="12" fill="#f28a1d" stroke="#a6551a"/><circle cx="207" cy="259" r="13" fill="#f28a1d" stroke="#a6551a"/>
        <path d="M485 56h75v86h-75zM500 60h44l12 16v48l-14 14h-38l-14-14V74zM578 50h99v103H578zM599 64h66v76h-66zM583 58h7v10h-7zM583 96h7v10h-7zM583 134h7v10h-7zM627 199h71v101h-71zM632 206v12M632 242v12M632 282v12M482 455h204v98H482v-14h8v-20h-8v-30h8v-16h-8z"/>
        <path d="M549 462h132M549 474h132M549 483h132M549 492h132M549 503h132M549 513h132M549 523h132M549 532h132M549 543h132M615 462v86M549 460v90" stroke-width="5"/>
        <path d="M142 1050l6 2-48 142-6-2zM116 1128l8 2M192 1111h7l-28 82h-6zM178 1158l8 2M202 905l8-2 74 252c2 16-10 34-18 38h-14l12-30zM222 984l8-2M246 1064l8-2M258 1143h16M315 979h12l5 139h-22zM318 1057h10M335 1136v56M374 898h12l4 295h-20zM374 978h6M374 1057h6M374 1136h6"/>
        <path d="M502 902l60 2 58 4-58 4-60 2zM562 902v12M508 902v10M562 1184l120 8-120 10zM428 1190q6-9 24-9h90v18h-90q-18-1-24-9zM466 1182h44l8 8-8 8h-44zM456 1186v6M520 1184v12"/>
        <path d="M476 976q8-7 30-6l136 7-136 6q-24 0-30-7zM490 971v12M520 970v12M474 1050q8-8 22-8h45v15h-45q-16 0-22-7zM490 1044v12M512 1044v12M448 1128q8-9 24-9h70v17h-70q-18 0-24-8zM470 1120v15M496 1120v15M512 1120v15M562 1120l102 8-102 6zM562 1156l122 6-122 5zM580 1158v8" stroke-width="5"/>
      </g>
      <g transform="translate(1330 370) scale(.33333)" stroke-width="3.500">
        <path d="M55 32h1021v575H55z"/>
        <defs><g id="sidep"><path d="M95 213h937v77H95z"/><path d="M104 220h40M160 220h20M206 220h50M284 220h30M340 220h40M430 220h90M556 220h90M672 220h90M796 220h104M420 283h86M520 283h130M672 283h104M796 283h104M104 283h30M160 283h20M206 283h60M300 283h30M360 283h40"/><path d="M110 244h22M110 258h30M160 240h24M162 232h20M160 258h20M206 245h50M206 257h50M220 251h20M300 252h40M352 252h30M370 254h24M312 248v8M380 246v6" stroke-width="4"/><path d="M106 226v10M138 228v8M152 224v12M186 226v10M198 226v12M264 226v10M292 222v16M348 226v10M106 264v14M148 264v10M152 268v10M188 264v12M194 266v12M230 264v12M264 264v14M292 262v16M348 262v14M404 266v10" stroke-width="4.500"/><circle cx="278" cy="252" r="11" stroke-width="5"/><path d="M408 222v60M413 226v54M440 224l60 52M448 224l52 48M500 276l-6-6M514 274l20-46h12l-20 48zM522 270l18-40M655 224h9v54h-9zM778 224h11v54h-11zM908 222v60M914 226v6M914 268v10" stroke-width="4.500"/><path d="M922 230h20v24h-20zM938 272h20M984 270h14l6 6-6 6h-12l-4-6zM952 238v6M992 238v8" stroke-dasharray="10 5"/><circle cx="1018" cy="242" r="8" stroke-dasharray="9 5"/></g></defs>
        <use href="#sidep"/><use href="#sidep" y="126"/>
      </g>
      <g stroke="none">
        <path d="M386 884h5v26h-5z" fill="#0a7a0a"/><path d="M388 872l6 14h-12z" fill="#0a7a0a"/>
        <path d="M391 908h24v4h-24z" fill="#c01818"/><path d="M427 910l-12-5v10z" fill="#c01818"/>
        <circle cx="388" cy="910" r="5.500" fill="#10109a"/>
        <text x="384" y="869" class="axis" fill="#2c8a2c">Y</text><text x="426" y="914" class="axis" fill="#d05050">X</text>
        <text x="349" y="973" class="front" fill="#111">*Frontal</text>
        <g class="mark"><text x="579" y="564" class="han">莫西网</text><text x="812" y="564">www.</text><text x="982" y="564">3dmox.</text><text x="1219" y="564">com</text></g>
      </g>
    </svg>
    <div class="hud">
      <button class="ic"><svg class="i20" viewBox="0 0 20 20"><path d="M1 19l7-8" stroke="#777" stroke-width="3"/><circle cx="12" cy="7" r="6" fill="#eef" stroke="#777" stroke-width="1.400"/><path d="M12 3v8M8 7h8" stroke="#444"/></svg></button>
      <button class="ic"><svg class="i20" viewBox="0 0 20 20"><path d="M1 19l5-6" stroke="#777" stroke-width="3"/><path d="M5 1h14v14" fill="none" stroke="#666" stroke-dasharray="3 2"/><circle cx="10" cy="8" r="6" fill="#eef" stroke="#888" stroke-width="1.400"/></svg></button>
      <button class="ic"><svg class="i20" viewBox="0 0 20 20"><path d="M2 18l3-8L16 2l2 3-8 12z" fill="#ddd" stroke="#888"/><path d="M9 14l5-4v3h5v3h-5v3z" fill="#4aa3c9"/></svg></button>
      <button class="ic"><svg class="i20" viewBox="0 0 20 20"><path d="M2 5l4-3h12v11l-4 3h-3V9H7v9H2z" fill="#7fb9cf" stroke="#456"/><path d="M2 8l5 6M2 12l5 6" stroke="#234"/></svg></button>
      <button class="ic"><svg class="i20" viewBox="0 0 20 20"><path d="M3 12L11 1h6l-5 6h4L5 17l2-5z" fill="#f5b44c" stroke="#955c10"/><path d="M9 19l4-9 5 9M11 16h5" fill="none" stroke="#4aa3c9" stroke-width="2"/></svg></button>
      <button class="ic wide"><svg class="i20" viewBox="0 0 20 20"><path d="M7 1h12v12h-5M7 1v5M13 1v5M14 7h5" fill="none" stroke="#567"/><path d="M1 6h12v13H1z" fill="#7ec3e0" stroke="#357"/></svg><svg class="dd"><use href="#dd"/></svg></button>
      <button class="ic wide"><svg class="i20" viewBox="0 0 20 20"><path d="M3 4l6-3 8 2v13l-6 3-8-2z" fill="#c6e2ee" stroke="#567"/><path d="M3 4l8 2v13l-8-2z" fill="#6fb6d4" stroke="#567"/></svg><svg class="dd"><use href="#dd"/></svg></button>
      <button class="ic wide"><svg class="i20" viewBox="0 0 20 20"><path d="M1 10q9-10 18 0-9 9-18 0z" fill="#ddd" stroke="#999"/><circle cx="10" cy="10" r="4.500" fill="#777"/><circle cx="10" cy="10" r="2" fill="#111"/></svg><svg class="dd"><use href="#dd"/></svg></button>
      <button class="ic"><svg class="i20" viewBox="0 0 20 20"><use href="#ball" width="17" height="17"/><path d="M9 19l1-4 7-6 2 3-6 6z" fill="#f0cf9a" stroke="#654"/></svg></button>
      <button class="ic wide"><svg class="i20" viewBox="0 0 20 20"><path d="M1 12h18v7H1z" fill="#e9e2a8" stroke="#443"/><use href="#ball" x="2" width="16" height="16"/><path d="M3 19l3-4 3 4M12 19l3-4 3 4" fill="#4a7"/></svg><svg class="dd"><use href="#dd"/></svg></button>
      <button class="ic wide"><svg class="i20" viewBox="0 0 20 20"><path d="M1 2h18v12H1z" fill="#ddd" stroke="#555" stroke-width="1.500"/><path d="M10 14v4M5 18h10" stroke="#555" stroke-width="2"/></svg><svg class="dd"><use href="#dd"/></svg></button>
    </div>
    <div class="docwin">
      <button class="ic"><svg class="i16" viewBox="0 0 16 16"><path d="M2 1h12v14H2zM5 1v14" fill="none" stroke="#909090" stroke-width="1.300"/><path d="M10 5v6L6 8z" fill="#909090"/></svg></button>
      <button class="ic"><svg class="i16" viewBox="0 0 16 16"><path d="M2 1h12v14H2zM11 1v14" fill="none" stroke="#909090" stroke-width="1.300"/><path d="M6 5v6l4-3z" fill="#909090"/></svg></button>
      <button class="ic"><svg class="i16"><use href="#mini"/></svg></button>
      <button class="ic"><svg class="i16"><use href="#restore"/></svg></button>
      <button class="ic"><svg class="i16"><use href="#close"/></svg></button>
    </div>
    <div class="taskpane">
      <button class="ic lit"><svg class="i20" viewBox="0 0 20 20"><circle cx="10" cy="10" r="9.500" fill="#14618f"/><path d="M3 6c3-5 11-5 14 0-4 2-10 2-14 0z" fill="#5ab0d8"/><path d="M8 7l5 3-5 3zM3 10h2M15 10h2M8 16h4" stroke="#9fdcf5" fill="none"/></svg></button>
      <button class="ic"><svg class="i20"><use href="#home"/></svg></button>
      <button class="ic"><svg class="i20" viewBox="0 0 20 20"><path d="M3 6l4-4 3 1 3-1 4 2v12l-3 3-4-1-4 0-3-3z" fill="#e3e3e3"/><path d="M7 6v12M10 7v12M14 6v12M3 6l4 1 3-1 4 0 3-2" stroke="#333" fill="none"/></svg></button>
      <button class="ic"><svg class="i20" viewBox="0 0 20 20"><path d="M1 2h6l2 2h8v14H1z" fill="#bbb"/><path d="M6 7h14l-4 11H2z" fill="#eee"/></svg></button>
      <button class="ic"><svg class="i20" viewBox="0 0 20 20"><path d="M1 1h18v18H1z" fill="#f7dc7d" stroke="#bbb"/><path d="M3 4h8v4H3zM13 4h4v4h-4zM7 8v5H3v4h9v-4H9M14 11v7" fill="none" stroke="#111" stroke-width="1.400"/></svg></button>
      <button class="ic"><svg class="i18"><use href="#ball"/></svg></button>
      <button class="ic"><svg class="i20" viewBox="0 0 20 20"><path d="M1 2h18v17H1z" fill="#eee"/><path d="M1 2h18v3H1z" fill="#4ba3d6"/><path d="M3 7h4v3H3zM3 11h4v3H3zM3 15h4v3H3z" fill="#49c" stroke="#234"/><path d="M9 8h9M9 12h9M9 16h9" stroke="#234" stroke-width="1.400"/></svg></button>
    </div>
    <div class="split"><i class="dot"></i></div>
  </section>
</main>

<nav class="btabs">
  <div class="pager"><button aria-label="Primeiro"><svg width="12" height="12" viewBox="0 0 12 12"><path d="M2 1v10M10 1v10L4 6z"/></svg></button><button aria-label="Voltar"><svg width="12" height="12" viewBox="0 0 12 12"><path d="M9 1v10L3 6z"/></svg></button><button aria-label="Avançar"><svg width="12" height="12" viewBox="0 0 12 12"><path d="M3 1v10l6-5z"/></svg></button><button aria-label="Último"><svg width="12" height="12" viewBox="0 0 12 12"><path d="M10 1v10M2 1v10l6-5z"/></svg></button></div>
  <button class="bt on">Modelo</button><button class="bt">Vistas 3D</button><button class="bt">Estudo de movimento 1</button>
</nav>
<footer class="status">
  <span class="ver">SOLIDWORKS Premium 2022 SP1.0</span>
  <span class="edit">Editando Peça</span>
  <svg class="i18" viewBox="0 0 20 20"><path d="M1 10h16v9H1z" fill="#eee"/><path d="M1 14h16M6 10v9M11 10v9" stroke="#357"/><path d="M7 1l6 11H1z" fill="#ffc93c" stroke="#733"/><path d="M7 5v4" stroke="#111" stroke-width="1.500"/><path d="M12 10c4 0 5-3 5-5h2l-3-4-4 4h2" fill="#111" stroke="#ddd" stroke-width=".5"/></svg>
  <span class="units">MMGS</span>
  <svg class="dd up"><use href="#dd"/></svg>
  <svg class="tag" width="14" height="14" viewBox="0 0 14 14"><path d="M1 2l6 6 7-2M3 1v4l5 7 6-2M6 9l8-2" fill="none" stroke="#eee" stroke-width="1.600"/></svg>
</footer>
</div>

<footer class="taskbar">
  <div class="weather">
    <svg width="40" height="40" viewBox="0 0 40 40"><circle cx="16" cy="18" r="10" fill="#f6a32f"/><path d="M9 35a7 7 0 0 1 0-13c2-10 16-9 18 0 9 0 9 13 1 13z" fill="#a9cbf6" stroke="#7ba8e6"/><circle cx="29" cy="11" r="10" fill="#c42b1c"/></svg><b class="badge">1</b>
    <div><span>22°C</span><span class="soft">Pred. nublado</span></div>
  </div>
  <div class="dock">
    <button class="app-ic" aria-label="Iniciar"><svg width="30" height="30" viewBox="0 0 30 30"><path d="M1 1h13.500v13.500H1zM15.500 1H29v13.500H15.500zM1 15.500h13.500V29H1zM15.500 15.500H29V29H15.500z" fill="#1f8fe0"/><path d="M1 1h13.500v13.500H1z" fill="#45bdf3"/></svg></button>
    <label class="search"><svg width="20" height="20" viewBox="0 0 20 20"><circle cx="10" cy="8" r="6.500" fill="none" stroke="#222" stroke-width="2"/><path d="M14 13l5 6" stroke="#222" stroke-width="2.400"/></svg><input type="text" placeholder="Pesquisar" aria-label="Pesquisar">
      <svg width="50" height="32" viewBox="0 0 50 32"><path d="M1 9v14c4 12 44 12 48 0V9z" fill="#56567e"/><ellipse cx="25" cy="9" rx="24" ry="8" fill="#e9d3c9" stroke="#aaa6c8" stroke-width="2"/><path d="M6 10l5-3 4 1-1 4-2-2-4 3zM20 6l6-2 4 2-1 5-2-3-4 1-1 3zM38 9l5-2 3 3-2 3-2-2-3 1z" fill="#231d50"/><path d="M4 17c6 5 14 0 20 4s14-2 22-4" fill="none" stroke="#a8a8cc" stroke-width="2"/></svg></label>
    <button class="app-ic" aria-label="Visão de tarefas"><svg width="30" height="30" viewBox="0 0 30 30"><path d="M9 1h20v20H9z" fill="#f8f8f4"/><path d="M1 9h20v19H1z" fill="#2b2b2b"/><path d="M9 9h12v12H9z" fill="#b0b0ae"/></svg></button>
    <button class="app-ic" aria-label="Copilot"><svg width="32" height="30" viewBox="0 0 32 30"><path d="M9 1h10c3 0 4 3 5 6h-6c-3 0-4 2-5 6l-2 7c-1 3-3 4-6 4-5 0-5-5-3-12S5 1 9 1z" fill="#2b8fe0"/><path d="M2 16c-1 5 0 8 4 8 3 0 4-1 5-4l2-6z" fill="#e8b63b"/><path d="M23 29H13c-3 0-4-3-5-6h5c3 0 5-2 6-6l2-7c1-3 3-4 6-4 5 0 5 5 3 12s-3 11-7 11z" fill="#d454b8"/><path d="M13 29c-3 0-4-3-5-6h5c3 0 5-2 6-6l10 2c-2 7-4 10-7 10z" fill="#f2708a"/></svg></button>
    <button class="app-ic" aria-label="Explorador"><svg width="32" height="28" viewBox="0 0 32 28"><path d="M1 1h11l3 4h16v9H1z" fill="#d99a17"/><path d="M1 6h30v21H1z" fill="#fbcf4c"/><path d="M6 19h20v8H6z" fill="#1777c2"/><path d="M10 22h12" stroke="#6db7ea" stroke-width="2"/></svg></button>
    <button class="app-ic" aria-label="Loja"><svg width="30" height="30" viewBox="0 0 30 30"><path d="M10 8V2h10v6" fill="none" stroke="#38a5e4" stroke-width="2"/><path d="M1 7h28v19q0 3-3 3H4q-3 0-3-3z" fill="#14538f"/><path d="M9 12h5v5H9z" fill="#f25022"/><path d="M16 12h5v5h-5z" fill="#7fba00"/><path d="M9 19h5v5H9z" fill="#1ba5ef"/><path d="M16 19h5v5h-5z" fill="#ffb900"/></svg></button>
    <button class="app-ic" aria-label="Edge"><svg width="30" height="30" viewBox="0 0 30 30"><circle cx="15" cy="15" r="14" fill="#1b6fc4"/><path d="M1 14C2 5 9 1 15 1c9 0 14 6 14 12 0 5-4 7-8 7-3 0-4-1-3-3 2-4-1-8-6-8-6 0-10 4-11 5z" fill="#3ccf9c"/><path d="M1 14C4 5 12 3 18 6c-4 0-9 2-10 9-1 8 5 13 12 13C10 32 0 25 1 14z" fill="#1c9de0"/><path d="M12 13c-3 6 2 12 14 10l3-8-7 5c-4 0-6-3-4-5 1-3-5-5-6-2z" fill="#eee0b0"/></svg></button>
    <button class="app-ic" aria-label="Chrome"><svg width="30" height="30" viewBox="0 0 30 30"><circle cx="15" cy="15" r="14" fill="#2da14b"/><path d="M15 15L3 8a14 14 0 0 1 24.500 0z" fill="#e33b2e"/><path d="M15 29a14 14 0 0 0 12.500-21H15z" fill="#fbc116"/><circle cx="15" cy="15" r="7" fill="#fff"/><circle cx="15" cy="15" r="5.500" fill="#2f78e8"/></svg><i class="run"></i></button>
    <button class="app-ic cur" aria-label="SOLIDWORKS 2022"><svg width="32" height="32" viewBox="0 0 32 32"><path d="M1 8l13-7 17 4v20l-12 6-18-4z" fill="#c4161c"/><path d="M1 8l13-7 17 4-11 5z" fill="#5b0c0e"/><path d="M20 10l11-5v20l-12 6z" fill="#8f1014"/><text x="3" y="23" class="sw">S</text><text x="14" y="23" class="sw">W</text><path d="M13 24h18v7H13z" fill="#222"/><text x="13" y="31" class="yr">2022</text></svg><i class="run blue"></i></button>
  </div>
  <div class="tray">
    <svg class="chev" width="16" height="10" viewBox="0 0 16 10"><path d="M2 8l6-6 6 6" fill="none" stroke="#222" stroke-width="1.800"/></svg>
    <svg width="20" height="18" viewBox="0 0 20 18"><g fill="none" stroke="#222" stroke-width="1.500"><path d="M1 7q9-9 18 0M4 10q6-6 12 0M7 13q3-3 6 0"/></g><circle cx="10" cy="15" r="1.800" fill="#222"/></svg>
    <svg width="20" height="18" viewBox="0 0 20 18"><path d="M1 6h3l5-4v14l-5-4H1zM12 6q2 3 0 6M14 3q5 6 0 12M17 2q5 7 0 14" fill="none" stroke="#222" stroke-width="1.400"/></svg>
    <svg width="20" height="14" viewBox="0 0 20 14"><rect x="1" y="1" width="16" height="12" rx="2" fill="none" stroke="#222" stroke-width="1.600"/><path d="M4 4h9v6H4zM18 5h2v4h-2z" fill="#222"/></svg>
    <div class="clock"><span>19:45</span><span>28/10/2024</span></div>
    <svg class="bell" width="18" height="20" viewBox="0 0 18 20"><path d="M1 15l2-3V7c0-8 12-8 12 0v5l2 3zM6 17h6q-3 4-6 0z" fill="#0f4c9c"/></svg>
  </div>
</footer>
</body>
</html>
```
FILE: styles.css
```css
* { box-sizing: border-box; }
body {
  margin: 0;
  height: 100vh;
  min-height: 900px;
  display: flex;
  flex-direction: column;
  background: #474747;
  color: #e4e4e4;
  font-family: "Open Sans", "Noto Sans", sans-serif;
  font-size: 14px;
}
button { font: inherit; color: inherit; background: none; border: 0; padding: 0; margin: 0; }
input { font: inherit; border: 0; background: none; outline: 0; padding: 0; min-width: 0; }
svg { flex: none; display: block; }
.defs { position: absolute; width: 0; height: 0; }
.i16 { width: 16px; height: 16px; }
.i18 { width: 18px; height: 18px; }
.i20 { width: 20px; height: 20px; }
.dd { width: 8px; height: 5px; color: #eee; }
.dd.grey { color: #777; }
.ic { display: flex; align-items: center; justify-content: center; }
.app { flex: 1; min-height: 0; display: flex; flex-direction: column; }

/* title bar */
.titlebar {
  height: 41px;
  display: flex;
  align-items: stretch;
  border-top: 1px solid #b5bab5;
  border-bottom: 1px solid #b9b9b9;
}
.brand { width: 146px; display: flex; align-items: center; padding-left: 4px; border-right: 1px solid #aaa; }
.ds { width: 22px; height: 26px; }
.word { flex: 1; padding-left: 4px; font-family: Lato, sans-serif; font-size: 14px; font-style: italic; color: #fff; }
.word b { font-weight: 900; }
.play { width: 20px; }
.quick { display: flex; padding-left: 20px; }
.solo { width: 33px; }
.pair { width: 47px; gap: 8px; }
.faint .dd { color: #777; }
.pick { width: 46px; margin: 3px 0; border: 1px solid #111; }
.pick span { flex: 1; align-self: stretch; background: #262626; display: grid; place-items: center; }
.pick .dd { margin: 0 3px; }
.doc-title { flex: 1; display: flex; align-items: center; padding-left: 366px; font-size: 13px; color: #c6c6c6; }
.right-tools { display: flex; align-items: center; }
.cmd { width: 290px; height: 28px; margin-right: 5px; padding: 0 5px; display: flex; align-items: center; gap: 8px; background: #fff; }
.cmd input { flex: 1; font-size: 13px; }
.cmd input::placeholder { color: #666; opacity: 1; }
.win { width: 41px; height: 38px; color: #fff; }
.win:last-child { width: 40px; }
.help span { width: 19px; height: 19px; border: 1px solid #fff; border-radius: 50%; font-size: 13px; line-height: 17px; font-weight: 600; }

.capture { height: 32px; border-bottom: 1px solid #b9b9b9; }
.capture-in { width: 103px; height: 31px; display: flex; align-items: center; gap: 7px; border-right: 1px solid #aaa; }
.vgrip { width: 2px; height: 27px; margin: 0 5px 0 3px; background: repeating-linear-gradient(#ddd 0 2px, transparent 2px 4px); }

/* ribbon */
.ribbon { height: 81px; display: flex; font-size: 13px; border-bottom: 1px solid #777; }
.grp { display: grid; margin-bottom: 2px; border-right: 1px solid #8a8a8a; }
.g1 { width: 380px; grid-template-columns: 98px 94px 1fr; padding-left: 2px; }
.g2 { width: 444px; grid-template-columns: 74px 138px 70px 1fr; }
.g3 { width: 369px; grid-template-columns: 44px 88px 98px 1fr; }
.g4 { width: 148px; grid-template-columns: 94px 1fr; }
.g5 { width: 56px; border: 0; }
.big { display: flex; flex-direction: column; align-items: center; justify-content: flex-start; padding-top: 5px; position: relative; line-height: 19px; text-align: center; }
.big span { padding-top: 2px; }
.big .dd { position: absolute; bottom: 7px; }
.stack { display: grid; grid-template-rows: 26px 26px 25px; padding: 1px 0 0 4px; }
.row { display: flex; align-items: center; gap: 7px; white-space: nowrap; }
.fold { margin-left: auto; width: 22px; align-items: flex-end; padding-bottom: 8px; }

/* work area */
.work { flex: 1; min-height: 0; display: grid; grid-template-columns: 339px 1fr; grid-template-rows: 29px minmax(0, 1fr); }
.tabs {
  grid-area: 1 / 1 / 2 / 3;
  z-index: 1;
  justify-self: start;
  display: grid;
  grid-template-columns: 83px 65px 92px 122px 203px 105px 64px 132px 189px;
  border-bottom: 1px solid #aaa;
}
.tab { background: #2e2e2e; border-right: 1px solid #999; white-space: nowrap; }
.tab:last-child { border: 0; }
.tab.on { background: #474747; font-weight: 700; color: #fff; }
.side { grid-area: 2 / 1 / 3 / 2; display: grid; grid-template-columns: 34px 32px minmax(0, 1fr); grid-template-rows: minmax(0, 1fr); align-items: start; background: #474747; }
.bar { padding: 3px 0 7px; border-bottom: 1px solid #999; }
.bar1 { border-right: 1px solid #999; }
.bar .ic { width: 100%; height: 26px; }
.bar svg { width: 20px; height: 20px; }
.bar hr { margin: 4px 1px 3px; border: 0; border-top: 1px solid #999; }
.hgrip { display: block; height: 2px; margin: 0 3px 8px; background: repeating-linear-gradient(90deg, #ddd 0 2px, transparent 2px 4px); }
.bar hr + .hgrip { margin-bottom: 11px; }
.tree-panel { align-self: stretch; min-height: 0; display: flex; flex-direction: column; padding-right: 3px; border-top: 2px solid #777; }
.pin { height: 26px; padding-right: 2px; display: grid; place-items: center; border-bottom: 1px solid #888; }
.dot { width: 7px; height: 7px; border-radius: 50%; background: #d0d0d0; }
.ptabs { height: 26px; margin-top: 1px; display: flex; border-top: 1px solid #999; }
.ptab { width: 40px; display: grid; place-items: center; background: #2e2e2e; border-right: 1px solid #888; }
.ptab.on { width: 42px; background: none; }
.ptab.cutoff { width: 24px; overflow: hidden; border: 0; justify-items: end; }
.scr { flex: 1; display: grid; place-items: center; background: #f2f2f2; border: 1px solid #bbb; }
.filter { height: 32px; margin: 0 4px 0 5px; padding-left: 1px; display: flex; align-items: center; background: #555; border: 1px solid #888; }
.filter input { flex: 1; }
.tree-wrap { flex: 1; min-height: 0; display: flex; border-left: 1px solid #ddd; }
.tree { flex: 1; min-width: 0; margin: 0; padding: 1px 0 0; list-style: none; overflow: hidden; }
.tree li { height: 24px; display: flex; align-items: center; gap: 4px; padding-left: 6px; white-space: nowrap; }
.tree li > svg { width: 20px; height: 20px; }
.tree i { width: 15px; height: 8px; }
.tree .exp { background: #ddd; clip-path: polygon(3px 0, 8px 4px, 3px 8px); }
.tree .root { padding-left: 3px; gap: 4px; color: #b5b81c; }
.vscroll { width: 20px; background: #f0f0f0; padding: 21px 0 0 8px; }
.vscroll i { display: block; width: 6px; height: 21px; background: #858585; }
.hscroll { height: 21px; background: #f0f0f0; padding: 8px 0 0 22px; margin-bottom: 3px; }
.hscroll i { display: block; width: 91px; height: 6px; background: #858585; }

.view {
  grid-area: 1 / 2 / 3 / 3;
  position: relative;
  background:
    linear-gradient(transparent 54%, #fff 74%),
    radial-gradient(ellipse 42% 80% at 78% 36%, rgba(217, 218, 232, .95), rgba(226, 229, 239, .7) 50%, transparent),
    linear-gradient(#fff 22%, #dfe2ea 56%);
}
.canvas { position: absolute; width: 100%; height: 100%; }
.axis { font-family: "Liberation Sans", sans-serif; font-size: 13px; }
.front { font-family: Lato, sans-serif; font-size: 20px; }
.mark { font-family: "Liberation Serif", serif; font-size: 68px; fill: #fff; fill-opacity: .92; filter: drop-shadow(2px 2px 0 #85857a); }
.mark .han { font-family: "Noto Sans CJK SC", sans-serif; font-size: 76px; font-weight: 100; }
.hud { position: absolute; left: 610px; top: 34px; display: flex; color: #777; }
.hud .ic { width: 26px; gap: 5px; }
.hud .wide { width: 40px; }
.hud .dd { width: 7px; color: #888; }
.docwin { position: absolute; right: 3px; top: 8px; display: flex; color: #8c8c8c; }
.docwin .ic { width: 26px; }
.taskpane { position: absolute; right: 0; top: 58px; width: 29px; border: 1px solid #777; border-right: 0; background: #303030; }
.taskpane .ic { width: 28px; height: 30px; border-bottom: 1px solid #777; }
.taskpane .lit { background: #a5a5a5; }
.split { position: absolute; left: -3px; top: 388px; width: 14px; height: 48px; background: #474747; display: grid; place-items: center; }

/* model tabs and status */
.btabs { height: 22px; padding-left: 66px; display: flex; border-bottom: 1px solid #888; }
.pager { width: 83px; display: grid; grid-template-columns: repeat(4, 1fr); border-top: 2px solid #111; }
.pager button { display: grid; place-items: center; background: #9d9bb5; border: 1px solid #77758f; }
.pager svg { fill: #777591; stroke: #777591; }
.bt { width: 89px; background: #303030; border-right: 1px solid #888; line-height: 20px; font-size: 15px; white-space: nowrap; }
.bt.on { width: 86px; padding-left: 4px; background: none; font-weight: 700; color: #fff; font-size: 16px; }
.bt:last-child { width: 207px; padding-right: 10px; }
.status { height: 22px; display: flex; align-items: center; padding: 0 0 0 1px; overflow: hidden; }
.ver { flex: 1; }
.edit { width: 122px; }
.units { margin-left: 100px; width: 87px; }
.up { transform: rotate(180deg); }
.tag { margin-left: 29px; }

/* taskbar */
.taskbar {
  height: 56px;
  display: grid;
  grid-template-columns: 1fr auto 1fr;
  align-items: center;
  color: #222;
  background: linear-gradient(90deg, #e8e0b4, #edd8cf 7%, #efe2ad 17%, #ede3a8 60%, #ece2b2);
}
.weather { position: relative; display: flex; align-items: center; gap: 4px; padding-left: 20px; }
.weather div { display: grid; line-height: 20px; }
.soft { color: #6f5f52; }
.badge { position: absolute; left: 46px; top: 0; font-size: 12px; line-height: 22px; color: #fff; }
.dock { display: flex; align-items: center; }
.app-ic { width: 55px; height: 48px; display: grid; place-items: center; position: relative; }
.dock .app-ic:first-child { width: 60px; }
.search { width: 272px; height: 38px; margin: 0 4px 0 2px; padding: 0 8px 0 12px; display: flex; align-items: center; gap: 12px; border-radius: 19px; background: #faf5dc; border: 1px solid #ddd4ac; }
.search input { flex: 1; font-size: 15px; }
.search input::placeholder { color: #55523f; opacity: 1; }
.cur { width: 48px; margin-left: 4px; border-radius: 4px; background: #f6f0d6; }
.run { position: absolute; bottom: 0; width: 6px; height: 4px; border-radius: 2px; background: #888; }
.run.blue { width: 20px; background: #1a6fb5; }
.sw { font: 700 15px "Liberation Sans", sans-serif; fill: #fff; }
.yr { font: 700 8px "Liberation Sans", sans-serif; fill: #fff; }
.tray { display: flex; align-items: center; justify-content: flex-end; gap: 10px; padding-right: 22px; }
.chev { margin-right: 12px; }
.clock { display: grid; text-align: right; line-height: 20px; margin-left: 14px; }
```
